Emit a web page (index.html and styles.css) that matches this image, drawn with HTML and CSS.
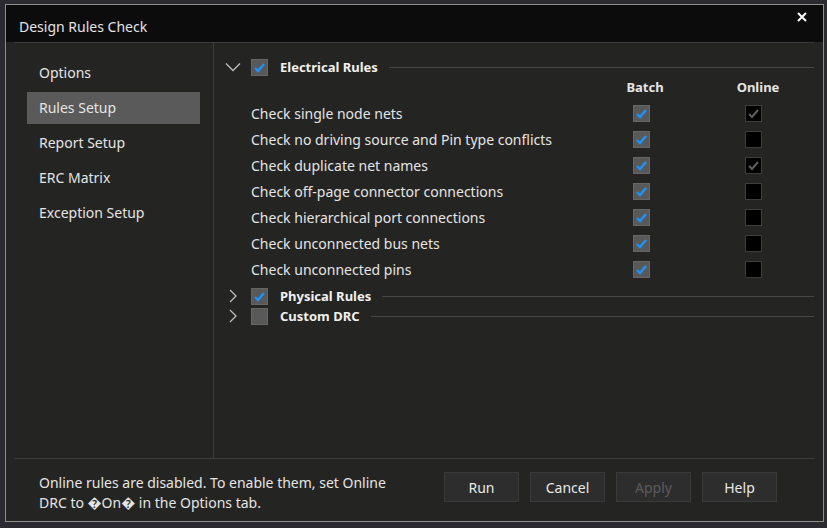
FILE: index.html
```html
<!DOCTYPE html>
<html lang="en">
<head>
  <meta charset="UTF-8" />
  <meta name="viewport" content="width=device-width, initial-scale=1.0"/>
  <title>Design Rules Check</title>
  <link rel="stylesheet" href="styles.css">
</head>
<body>
  <div id="drc-dialog">
    <div class="title-bar">
      <span class="title">Design Rules Check</span>
      <span class="close-btn">
        <svg width="10" height="10" viewBox="0 0 10 10"><path d="M1 1L9 9M9 1L1 9" stroke="#fff" stroke-width="2"/></svg>
      </span>
    </div>

    <div class="dialog-body">
      <div class="nav">
        <div class="nav-item">Options</div>
        <div class="nav-item active">Rules Setup</div>
        <div class="nav-item">Report Setup</div>
        <div class="nav-item">ERC Matrix</div>
        <div class="nav-item">Exception Setup</div>
      </div>

      <div class="rules">
        <div class="group-head">
          <svg class="chevron" width="16" height="16" viewBox="0 0 16 16"><polyline points="1,4.5 8,11.5 15,4.5" fill="none" stroke="#bdbdbd" stroke-width="1.3"/></svg>
          <span class="cb"><svg width="13" height="13" viewBox="0 0 13 13"><polyline points="2,7 5,10 11,3" fill="none" stroke="#1a94ff" stroke-width="2.3"/></svg></span>
          <span class="group-title">Electrical Rules</span>
          <span class="group-line"></span>
        </div>

        <div class="rule-list">
          <div class="col-heads">
            <span class="col-head">Batch</span>
            <span class="col-head">Online</span>
          </div>

          <div class="rule-row">
            <span class="rule-name">Check single node nets</span>
            <span class="cb"><svg width="13" height="13" viewBox="0 0 13 13"><polyline points="2,7 5,10 11,3" fill="none" stroke="#1a94ff" stroke-width="2.3"/></svg></span>
            <span></span>
            <span class="cb online"><svg width="13" height="13" viewBox="0 0 13 13"><polyline points="2,7 5,10 11,3" fill="none" stroke="#5e5e5e" stroke-width="2"/></svg></span>
          </div>
          <div class="rule-row">
            <span class="rule-name">Check no driving source and Pin type conflicts</span>
            <span class="cb"><svg width="13" height="13" viewBox="0 0 13 13"><polyline points="2,7 5,10 11,3" fill="none" stroke="#1a94ff" stroke-width="2.3"/></svg></span>
            <span></span>
            <span class="cb online"></span>
          </div>
          <div class="rule-row">
            <span class="rule-name">Check duplicate net names</span>
            <span class="cb"><svg width="13" height="13" viewBox="0 0 13 13"><polyline points="2,7 5,10 11,3" fill="none" stroke="#1a94ff" stroke-width="2.3"/></svg></span>
            <span></span>
            <span class="cb online"><svg width="13" height="13" viewBox="0 0 13 13"><polyline points="2,7 5,10 11,3" fill="none" stroke="#5e5e5e" stroke-width="2"/></svg></span>
          </div>
          <div class="rule-row">
            <span class="rule-name">Check off-page connector connections</span>
            <span class="cb"><svg width="13" height="13" viewBox="0 0 13 13"><polyline points="2,7 5,10 11,3" fill="none" stroke="#1a94ff" stroke-width="2.3"/></svg></span>
            <span></span>
            <span class="cb online"></span>
          </div>
          <div class="rule-row">
            <span class="rule-name">Check hierarchical port connections</span>
            <span class="cb"><svg width="13" height="13" viewBox="0 0 13 13"><polyline points="2,7 5,10 11,3" fill="none" stroke="#1a94ff" stroke-width="2.3"/></svg></span>
            <span></span>
            <span class="cb online"></span>
          </div>
          <div class="rule-row">
            <span class="rule-name">Check unconnected bus nets</span>
            <span class="cb"><svg width="13" height="13" viewBox="0 0 13 13"><polyline points="2,7 5,10 11,3" fill="none" stroke="#1a94ff" stroke-width="2.3"/></svg></span>
            <span></span>
            <span class="cb online"></span>
          </div>
          <div class="rule-row">
            <span class="rule-name">Check unconnected pins</span>
            <span class="cb"><svg width="13" height="13" viewBox="0 0 13 13"><polyline points="2,7 5,10 11,3" fill="none" stroke="#1a94ff" stroke-width="2.3"/></svg></span>
            <span></span>
            <span class="cb online"></span>
          </div>
        </div>

        <div class="group-head collapsed">
          <svg class="chevron" width="16" height="16" viewBox="0 0 16 16"><polyline points="5,2 11,8 5,14" fill="none" stroke="#bdbdbd" stroke-width="1.3"/></svg>
          <span class="cb"><svg width="13" height="13" viewBox="0 0 13 13"><polyline points="2,7 5,10 11,3" fill="none" stroke="#1a94ff" stroke-width="2.3"/></svg></span>
          <span class="group-title">Physical Rules</span>
          <span class="group-line"></span>
        </div>
        <div class="group-head">
          <svg class="chevron" width="16" height="16" viewBox="0 0 16 16"><polyline points="5,2 11,8 5,14" fill="none" stroke="#bdbdbd" stroke-width="1.3"/></svg>
          <span class="cb"></span>
          <span class="group-title">Custom DRC</span>
          <span class="group-line"></span>
        </div>
      </div>
    </div>

    <div class="footer">
      <div class="note">Online rules are disabled. To enable them, set Online DRC to &#xFFFD;On&#xFFFD; in the Options tab.</div>
      <div class="button-container">
        <button>Run</button>
        <button>Cancel</button>
        <button disabled>Apply</button>
        <button>Help</button>
      </div>
    </div>
  </div>
</body>
</html>
```

FILE: styles.css
```css
body {
  margin: 0;
  width: 827px;
  height: 528px;
  overflow: hidden;
  background: #2a2a30;
  font-family: "Noto Sans", "Open Sans", sans-serif;
  font-size: 14px;
  color: #e4e4e4;
}

#drc-dialog {
  box-sizing: border-box;
  margin: 4px 0 0 5px;
  width: 819px;
  height: 518px;
  border: 1px solid #8e8e8e;
  background: #242523;
  display: flex;
  flex-direction: column;
}

.title-bar {
  height: 37px;
  flex-shrink: 0;
  background: #0c0c0c;
  display: flex;
  justify-content: space-between;
  align-items: flex-start;
  padding: 0 16px 0 13px;
}

.title {
  margin-top: 12px;
  line-height: 20px;
}

.close-btn {
  margin-top: 7px;
  display: flex;
}

.dialog-body {
  height: 417px;
  box-sizing: border-box;
  margin: 0 9px 0 8px;
  border-top: 1px solid #3c3c3c;
  border-bottom: 1px solid #3c3c3c;
  display: flex;
}

.nav {
  width: 200px;
  box-sizing: border-box;
  flex-shrink: 0;
  border-right: 1px solid #3c3c3c;
  padding: 14px 13px 0 13px;
}

.nav-item {
  height: 32px;
  line-height: 32px;
  padding-left: 12px;
  margin-bottom: 3px;
}

.nav-item.active {
  background: #5a5a5a;
}

.rules {
  flex: 1;
  padding: 14px 0 0 11px;
}

.group-head {
  display: flex;
  align-items: center;
  height: 20px;
}

.group-head.collapsed {
  margin-top: 4px;
}

.chevron {
  margin-right: 10px;
}

.group-title {
  font-size: 13px;
  font-weight: bold;
  margin-left: 12px;
  color: #f0f0f0;
}

.group-line {
  flex: 1;
  height: 1px;
  margin-left: 11px;
  background: #474747;
}

.cb {
  width: 17px;
  height: 17px;
  box-sizing: border-box;
  border: 1px solid #666;
  background: #595959;
  display: flex;
  align-items: center;
  justify-content: center;
}

.cb.online {
  background: #000;
  border-color: #3d3d3d;
}

.rule-list {
  margin-left: 26px;
}

.col-heads {
  display: flex;
  height: 20px;
  line-height: 20px;
  padding-left: 364px;
  gap: 53px;
  margin-bottom: 3px;
  font-size: 13px;
  font-weight: bold;
}

.col-head {
  width: 60px;
  text-align: center;
}

.rule-row {
  display: grid;
  grid-template-columns: 382px 17px 95px 17px;
  align-items: center;
  height: 26px;
}

.footer {
  flex: 1;
  margin: 0 9px 0 8px;
  padding: 13px 37px 0 25px;
  display: flex;
}

.note {
  width: 350px;
  margin-top: 1px;
  line-height: 20px;
}

.button-container {
  margin-left: auto;
  display: flex;
  gap: 11px;
}

button {
  width: 75px;
  height: 30px;
  background: #2d2d2d;
  border: 1px solid #3a3a3a;
  color: #e8e8e8;
  font-family: inherit;
  font-size: 14px;
  padding: 0;
}

button:disabled {
  color: #5c5c5c;
}
```
